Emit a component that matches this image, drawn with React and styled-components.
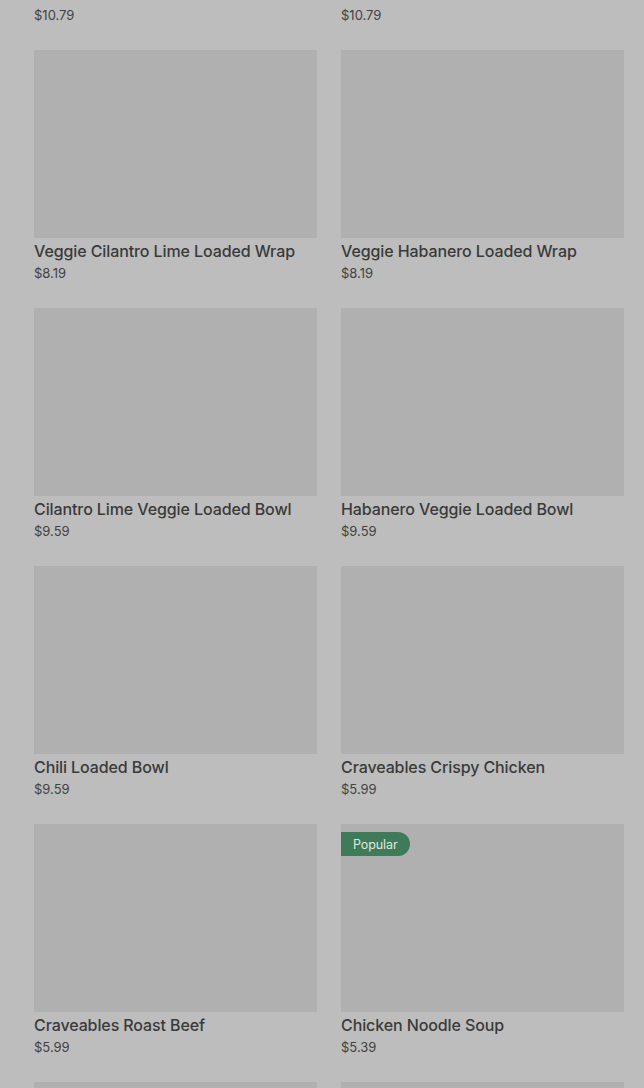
import React from "react";
import styled, { createGlobalStyle } from "styled-components";

const Global = createGlobalStyle`
  html, body { margin: 0; padding: 0; background: #bdbdbd; }
  body { font-family: Inter, "Noto Sans", sans-serif; overflow: hidden; }
`;

const Page = styled.div`
  height: 1088px;
  overflow: hidden;
  background: #bdbdbd;
`;

const Grid = styled.div`
  display: grid;
  grid-template-columns: 283px 283px;
  column-gap: 24px;
  padding-left: 34px;
  margin-top: -208px;
`;

const Card = styled.div`
  display: flex;
  flex-direction: column;
  height: 258px;
`;

const Thumb = styled.div`
  position: relative;
  height: 188px;
  background: #b0b0b0;
  flex-shrink: 0;
`;

const Badge = styled.span`
  position: absolute;
  top: 8px;
  left: 0;
  height: 24px;
  padding: 0 12px;
  display: flex;
  align-items: center;
  background: #3f7b58;
  color: #dfe8e2;
  font-size: 12.5px;
  letter-spacing: -0.1px;
  border-radius: 0 12px 12px 0;
`;

const Name = styled.div`
  margin-top: 3px;
  font-size: 16px;
  font-weight: 500;
  letter-spacing: -0.1px;
  line-height: 20px;
  color: #3a3a3a;
`;

const Price = styled.div`
  margin-top: 3px;
  font-size: 13px;
  line-height: 18px;
  color: #424242;
`;

const items = [
  { name: "", price: "$10.79" },
  { name: "", price: "$10.79" },
  { name: "Veggie Cilantro Lime Loaded Wrap", price: "$8.19" },
  { name: "Veggie Habanero Loaded Wrap", price: "$8.19" },
  { name: "Cilantro Lime Veggie Loaded Bowl", price: "$9.59" },
  { name: "Habanero Veggie Loaded Bowl", price: "$9.59" },
  { name: "Chili Loaded Bowl", price: "$9.59" },
  { name: "Craveables Crispy Chicken", price: "$5.99" },
  { name: "Craveables Roast Beef", price: "$5.99" },
  { name: "Chicken Noodle Soup", price: "$5.39", popular: true },
  { name: "", price: "" },
  { name: "", price: "" },
];

export default function App() {
  return (
    <Page>
      <Global />
      <Grid>
        {items.map((it, i) => (
          <Card key={i}>
            <Thumb>{it.popular && <Badge>Popular</Badge>}</Thumb>
            <Name>{it.name || "\u00a0"}</Name>
            <Price>{it.price}</Price>
          </Card>
        ))}
      </Grid>
    </Page>
  );
}
